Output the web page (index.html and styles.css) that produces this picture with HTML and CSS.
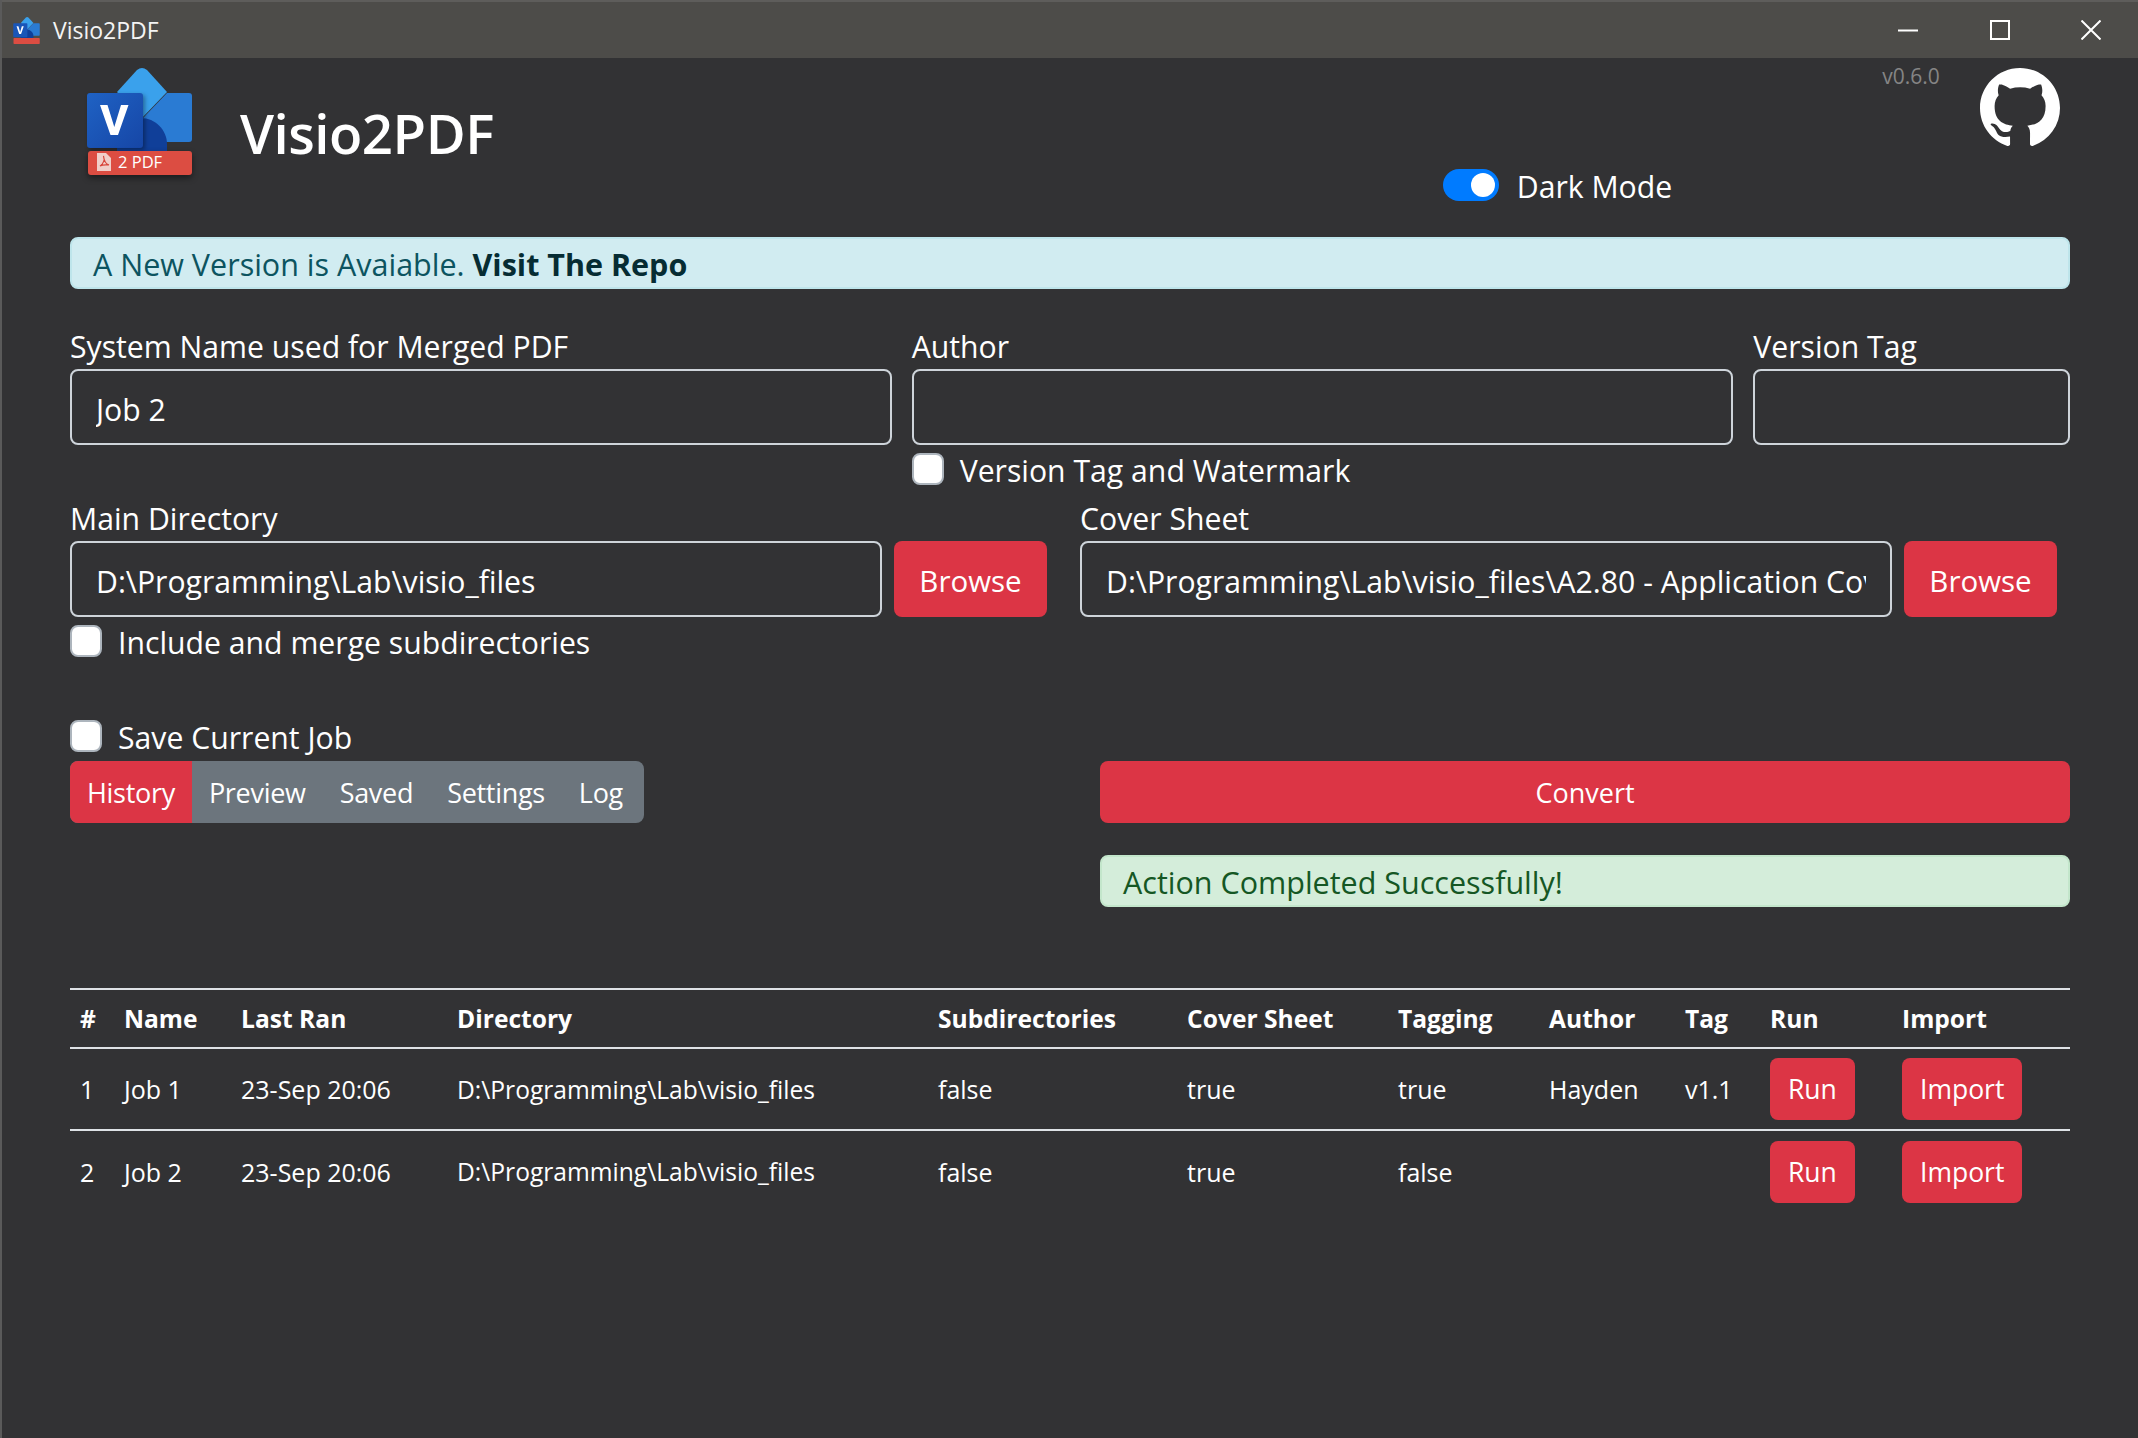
FILE: index.html
```html
<!DOCTYPE html>
<html lang="en">
<head>
    <meta charset="UTF-8">
    <title>Visio2PDF</title>
    <link rel="stylesheet" href="styles.css">
</head>
<body>
    <div class="window">
        <div class="titlebar">
            <svg class="title-icon" viewBox="0 0 105 107">
                <path d="M50 2 Q55 -2 60 2 L80 24 L55 50 L30 24 Z" fill="#3aa1ec"/>
                <path d="M80 25 H102 Q105 25 105 28 V71 Q105 74 102 74 H56 V50 Z" fill="#2a7bd3"/>
                <path d="M30 74 V91 H80 V76 C80 62 68 50 54 50 H30 Z" fill="#103f99"/>
                <rect x="0" y="25" width="56" height="55" rx="3" fill="#1a56b8"/>
                <path d="M13 37 H20.500 L27.300 59 L34 37 H41.500 L31 67 H23.500 Z" fill="#fff"/>
                <rect x="1" y="83" width="104" height="24" rx="3" fill="#dc4d42"/>
            </svg>
            <span class="title-text">Visio2PDF</span>
            <div class="controls">
                <svg width="20" height="20" viewBox="0 0 20 20"><path d="M0 10.500 H20" stroke="#fff" stroke-width="2"/></svg>
                <svg width="20" height="20" viewBox="0 0 20 20"><rect x="1" y="1" width="18" height="18" fill="none" stroke="#fff" stroke-width="2"/></svg>
                <svg width="20" height="20" viewBox="0 0 20 20"><path d="M0.500 0.500 L19.500 19.500 M19.500 0.500 L0.500 19.500" stroke="#fff" stroke-width="2"/></svg>
            </div>
        </div>

        <div class="content">
            <div class="header">
                <svg class="logo" viewBox="0 0 105 107">
                    <defs>
                        <linearGradient id="vgrad" x1="0" y1="0" x2="1" y2="1">
                            <stop offset="0" stop-color="#1f62c4"/>
                            <stop offset="1" stop-color="#1646a6"/>
                        </linearGradient>
                    </defs>
                    <path d="M50 2 Q55 -2 60 2 L80 24 L55 50 L30 24 Z" fill="#3aa1ec"/>
                    <path d="M80 25 H102 Q105 25 105 28 V71 Q105 74 102 74 H56 V50 Z" fill="#2a7bd3"/>
                    <path d="M30 74 V91 H80 V76 C80 62 68 50 54 50 H30 Z" fill="#103f99"/>
                    <rect class="front" x="0" y="25" width="56" height="55" rx="3" fill="url(#vgrad)"/>
                    <path d="M13 37 H20.500 L27.300 59 L34 37 H41.500 L31 67 H23.500 Z" fill="#fff"/>
                    <rect class="bar" x="1" y="83" width="104" height="24" rx="3" fill="#dc4d42"/>
                    <path d="M10 85 H19 L24 90 V103 H10 Z" fill="#f0cfc9"/>
                    <path d="M13 98 C16 96 18 92 16.500 88 C17 93 19 96 22 97 C18 96.500 15 97 13 98 Z" fill="none" stroke="#d8453a" stroke-width="1.200"/>
                    <text x="31" y="100" class="logo-text">2 PDF</text>
                </svg>
                <h1>Visio2PDF</h1>
                <label class="dark-toggle">
                    <span class="switch"><span class="knob"></span></span>
                    Dark Mode
                </label>
                <span class="version">v0.6.0</span>
                <svg class="github" viewBox="0 0 16 16"><path fill="#fff" fill-rule="evenodd" d="M8 0C3.58 0 0 3.58 0 8c0 3.540 2.290 6.530 5.470 7.590.4.070.55-.17.55-.38 0-.19-.01-.82-.01-1.490-2.010.37-2.530-.49-2.690-.94-.09-.23-.48-.94-.82-1.130-.28-.15-.68-.52-.01-.53.63-.01 1.080.58 1.230.82.72 1.210 1.870.87 2.330.66.07-.52.28-.87.51-1.070-1.780-.2-3.640-.89-3.640-3.950 0-.87.31-1.590.82-2.150-.08-.2-.36-1.020.08-2.120 0 0 .67-.21 2.200.82.64-.18 1.320-.27 2-.27.68 0 1.360.09 2 .27 1.530-1.040 2.200-.82 2.200-.82.44 1.100.16 1.920.08 2.120.51.56.82 1.270.82 2.150 0 3.070-1.870 3.750-3.650 3.950.29.25.54.73.54 1.480 0 1.070-.01 1.930-.01 2.200 0 .21.15.46.55.38A8.013 8.013 0 0016 8c0-4.420-3.580-8-8-8z"/></svg>
            </div>

            <div class="alert alert-info">A New Version is Avaiable. <b>Visit The Repo</b></div>

            <div class="row">
                <div class="col col-5">
                    <label class="field-label">System Name used for Merged PDF</label>
                    <input class="text-input" type="text" value="Job 2">
                </div>
                <div class="col col-5">
                    <label class="field-label">Author</label>
                    <input class="text-input" type="text">
                    <label class="check"><input type="checkbox"> Version Tag and Watermark</label>
                </div>
                <div class="col col-2">
                    <label class="field-label">Version Tag</label>
                    <input class="text-input" type="text">
                </div>
            </div>

            <div class="paths">
                <div class="path-left">
                    <label class="field-label">Main Directory</label>
                    <div class="input-group">
                        <input class="text-input" type="text" value="D:\Programming\Lab\visio_files">
                        <button class="btn btn-browse">Browse</button>
                    </div>
                    <label class="check"><input type="checkbox"> Include and merge subdirectories</label>
                </div>
                <div class="path-right">
                    <label class="field-label">Cover Sheet</label>
                    <div class="input-group">
                        <input class="text-input" type="text" value="D:\Programming\Lab\visio_files\A2.80 - Application Cover Sheet.pdf">
                        <button class="btn btn-browse">Browse</button>
                    </div>
                </div>
            </div>

            <label class="check save-job"><input type="checkbox"> Save Current Job</label>

            <div class="actions">
                <div class="tabs">
                    <button class="tab active">History</button>
                    <button class="tab">Preview</button>
                    <button class="tab">Saved</button>
                    <button class="tab">Settings</button>
                    <button class="tab">Log</button>
                </div>
                <div class="convert-col">
                    <button class="btn btn-convert">Convert</button>
                    <div class="alert alert-success">Action Completed Successfully!</div>
                </div>
            </div>

            <table class="jobs">
                <colgroup>
                    <col class="c1"><col class="c2"><col class="c3"><col class="c4"><col class="c5"><col class="c6">
                    <col class="c7"><col class="c8"><col class="c9"><col class="c10"><col class="c11">
                </colgroup>
                <thead>
                    <tr>
                        <th>#</th><th>Name</th><th>Last Ran</th><th>Directory</th><th>Subdirectories</th><th>Cover Sheet</th>
                        <th>Tagging</th><th>Author</th><th>Tag</th><th>Run</th><th>Import</th>
                    </tr>
                </thead>
                <tbody>
                    <tr>
                        <td>1</td><td>Job 1</td><td>23-Sep 20:06</td><td class="dir">D:\Programming\Lab\visio_files</td><td>false</td><td>true</td>
                        <td>true</td><td>Hayden</td><td>v1.1</td>
                        <td><button class="btn btn-row">Run</button></td>
                        <td><button class="btn btn-row">Import</button></td>
                    </tr>
                    <tr>
                        <td>2</td><td>Job 2</td><td>23-Sep 20:06</td><td class="dir">D:\Programming\Lab\visio_files</td><td>false</td><td>true</td>
                        <td>false</td><td></td><td></td>
                        <td><button class="btn btn-row">Run</button></td>
                        <td><button class="btn btn-row">Import</button></td>
                    </tr>
                </tbody>
            </table>
        </div>
    </div>
</body>
</html>
```
FILE: styles.css
```css
*{
    margin: 0;
    padding: 0;
    box-sizing: border-box;
}
body{
    width: 2138px;
    height: 1438px;
    overflow: hidden;
    background: #323234;
    color: #fff;
    font-family: "Open Sans", "Noto Sans", sans-serif;
    font-size: 30.2px;
}
.window{
    height: 1438px;
    border-left: 2px solid #5a5a5a;
}
.titlebar{
    height: 58px;
    background: #4d4c49;
    border-top: 2px solid #5e5d5b;
    display: flex;
    align-items: center;
    padding-left: 11px;
}
.title-icon{
    width: 27px;
    height: 27px;
    margin-right: 13px;
}
.title-text{
    font-size: 23px;
    color: #f4f4f4;
}
.controls{
    margin-left: auto;
    display: flex;
    gap: 71.500px;
    padding-right: 37px;
}
.content{
    padding: 0 68px;
}
.header{
    height: 179px;
    display: flex;
    align-items: flex-start;
}
.logo{
    width: 105px;
    height: 107px;
    margin: 10px 0 0 17px;
    overflow: visible;
}
.logo-text{
    font-size: 16.500px;
    fill: #fff;
}
.front{
    filter: drop-shadow(2px 2px 2px rgba(0,0,0,.35));
}
.bar{
    filter: drop-shadow(0 3px 3px rgba(0,0,0,.45));
}
h1{
    font-size: 54.600px;
    font-weight: 600;
    letter-spacing: -0.5px;
    line-height: 76px;
    margin: 37px 0 0 48px;
}
.dark-toggle{
    display: flex;
    align-items: flex-start;
    gap: 18px;
    line-height: 35px;
    margin: 111px 0 0 949px;
    height: 32px;
}
.switch{
    width: 56px;
    height: 32px;
    border-radius: 16px;
    background: #007bff;
    position: relative;
}
.knob{
    position: absolute;
    right: 4px;
    top: 4px;
    width: 24px;
    height: 24px;
    border-radius: 50%;
    background: #fff;
}
.version{
    font-size: 21px;
    color: #858585;
    margin: 4px 0 0 210px;
}
.github{
    width: 80px;
    height: 80px;
    margin: 10px 0 0 40px;
}
.alert{
    height: 52px;
    line-height: 51px;
    padding: 0 21px;
    border-radius: 8px;
    border: 2px solid;
    font-size: 30.500px;
}
.alert-info{
    background: #d1ecf1;
    border-color: #bee5eb;
    color: #0c5460;
    margin-bottom: 34px;
}
.alert-info b{
    color: #062c33;
}
.alert-success{
    background: #d4edda;
    border-color: #c3e6cb;
    color: #155724;
    margin-top: 32px;
}
.row{
    display: flex;
    margin: 0 -10px 10px;
}
.col{
    padding: 0 10px;
}
.col-5{
    width: 41.6667%;
}
.col-2{
    width: 16.6667%;
}
.field-label{
    display: block;
    height: 46px;
    line-height: 48px;
}
.text-input{
    display: block;
    width: 100%;
    height: 76px;
    padding: 4px 24px 0;
    background: transparent;
    border: 2px solid #ced4da;
    border-radius: 8px;
    color: #fff;
    font: inherit;
}
.check{
    display: flex;
    align-items: flex-start;
    gap: 16px;
    height: 32px;
    line-height: 35px;
    margin-top: 8px;
}
.check input{
    appearance: none;
    width: 32px;
    height: 32px;
    background: #fff;
    border: 2px solid #adb5bd;
    border-radius: 8px;
}
.paths{
    display: flex;
    gap: 33px;
}
.path-left,.path-right{
    width: 977px;
}
.input-group{
    display: flex;
    gap: 12px;
}
.input-group .text-input{
    width: 812px;
    flex: none;
}
.btn{
    border: none;
    background: #dc3545;
    color: #fff;
    border-radius: 8px;
    font: inherit;
}
.btn-browse{
    width: 153px;
    height: 76px;
    padding-top: 2px;
    font-size: 29.500px;
}
.save-job{
    margin-top: 63px;
}
.actions{
    display: flex;
    justify-content: space-between;
    align-items: flex-start;
    margin-top: 9px;
}
.tabs{
    display: flex;
    background: #6c757d;
    border-radius: 8px;
    overflow: hidden;
}
.tab{
    height: 62px;
    padding: 0 17px;
    border: none;
    background: transparent;
    color: #fff;
    font: inherit;
    font-size: 27px;
    letter-spacing: -0.3px;
}
.tab:last-child{
    padding-right: 21px;
}
.tab.active{
    background: #dc3545;
}
.convert-col{
    width: 970px;
}
.btn-convert{
    width: 100%;
    height: 62px;
    font-size: 27px;
}
.jobs{
    width: 2000px;
    margin-top: 81px;
    table-layout: fixed;
    border-collapse: collapse;
    font-size: 25px;
}
.jobs th,.jobs td{
    text-align: left;
    padding: 0 10px;
}
.jobs th{
    height: 59px;
    font-size: 24.600px;
    font-weight: 700;
    border-top: 2px solid #dee2e6;
    border-bottom: 2px solid #dee2e6;
}
.jobs td{
    height: 82px;
}
.jobs td.dir{
    font-size: 24.600px;
}
.jobs tbody tr + tr td{
    border-top: 2px solid #dee2e6;
}
.btn-row{
    height: 62px;
    padding: 0 18px;
    font-size: 26.500px;
}
.c1{width: 44px;}
.c2{width: 117px;}
.c3{width: 216px;}
.c4{width: 481px;}
.c5{width: 249px;}
.c6{width: 211px;}
.c7{width: 151px;}
.c8{width: 136px;}
.c9{width: 85px;}
.c10{width: 132px;}
.c11{width: 178px;}
```
